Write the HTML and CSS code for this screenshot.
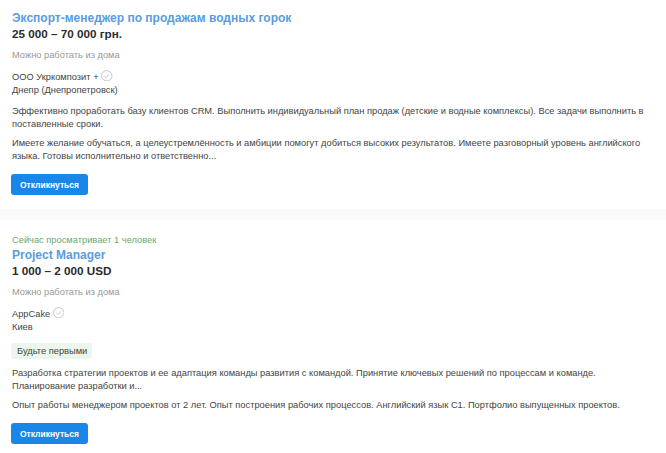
FILE: index.html
```html
<!DOCTYPE html>
<html lang="en">
<head>
  <meta charset="UTF-8" />
  <title>Вакансии</title>
  <link rel="stylesheet" href="styles.css">
</head>
<body>

<div class="card first">
  <h2><a href="#">Экспорт-менеджер по продажам водных горок</a></h2>
  <div class="salary">25 000 – 70 000 грн.</div>
  <div class="remote">Можно работать из дома</div>
  <div class="company">
    <div>ООО Укркомпозит + <svg class="check" viewBox="0 0 12 12"><circle cx="6" cy="6" r="5.4"/><path d="M3.6 6.2l1.7 1.7 3.2-3.4"/></svg></div>
    <div>Днепр (Днепропетровск)</div>
  </div>
  <p>Эффективно проработать базу клиентов CRM. Выполнить индивидуальный план продаж (детские и водные комплексы). Все задачи выполнить в поставленные сроки.</p>
  <p>Имеете желание обучаться, а целеустремлённость и амбиции помогут добиться высоких результатов. Имеете разговорный уровень английского языка. Готовы исполнительно и ответственно...</p>
  <button class="apply">Откликнуться</button>
</div>

<div class="gap"></div>

<div class="card">
  <div class="viewers">Сейчас просматривает 1 человек</div>
  <h2><a href="#">Project Manager</a></h2>
  <div class="salary">1 000 – 2 000 USD</div>
  <div class="remote">Можно работать из дома</div>
  <div class="company">
    <div>AppCake <svg class="check" viewBox="0 0 12 12"><circle cx="6" cy="6" r="5.4"/><path d="M3.6 6.2l1.7 1.7 3.2-3.4"/></svg></div>
    <div>Киев</div>
  </div>
  <span class="tag">Будьте первыми</span>
  <p>Разработка стратегии проектов и ее адаптация команды развития с командой. Принятие ключевых решений по процессам и команде. Планирование разработки и...</p>
  <p>Опыт работы менеджером проектов от 2 лет. Опыт построения рабочих процессов. Английский язык С1. Портфолио выпущенных проектов.</p>
  <button class="apply">Откликнуться</button>
</div>

</body>
</html>
```

FILE: styles.css
```css
body {
  margin: 0;
  font-family: "Liberation Sans", Arial, sans-serif;
  font-size: 9.3px;
  line-height: 13px;
  color: #444;
  background: white;
}
.card {
  padding: 10px 12px 14px;
}
.first {
  box-shadow: 0 2px 8px rgba(0,0,0,0.05);
}
.gap {
  height: 11px;
  background: #fafafa;
}
.card + .gap + .card {
  padding-top: 14px;
}
h2 {
  margin: 0;
  font-size: 12px;
  line-height: 16px;
  font-weight: bold;
}
h2 a {
  color: #5b9bdc;
  text-decoration: none;
}
.viewers {
  color: #6aa96a;
}
.salary {
  font-size: 11.7px;
  line-height: 16px;
  font-weight: bold;
  color: #2b2b2b;
}
.remote {
  margin-top: 7px;
  color: #999;
}
.company {
  margin-top: 9px;
}
.check {
  width: 11.5px;
  height: 11.5px;
  margin: -4px 0;
  fill: none;
  stroke: #aaa;
  stroke-width: 0.7;
  vertical-align: 3px;
}
.tag {
  display: inline-block;
  margin: 9px 0 0 -1px;
  padding: 1.5px 5px 1.5px 6px;
  background: #eaf7ea;
  border-radius: 3px;
}
p {
  margin: 8px 0 0;
}
p + p {
  margin-top: 6px;
}
.apply {
  display: block;
  margin: 11px 0 0 -1px;
  width: 77px;
  height: 21px;
  border: none;
  border-radius: 3px;
  background: #1a86e8;
  color: white;
  font-family: inherit;
  font-size: 8.5px;
  font-weight: bold;
  padding: 0;
}
```
